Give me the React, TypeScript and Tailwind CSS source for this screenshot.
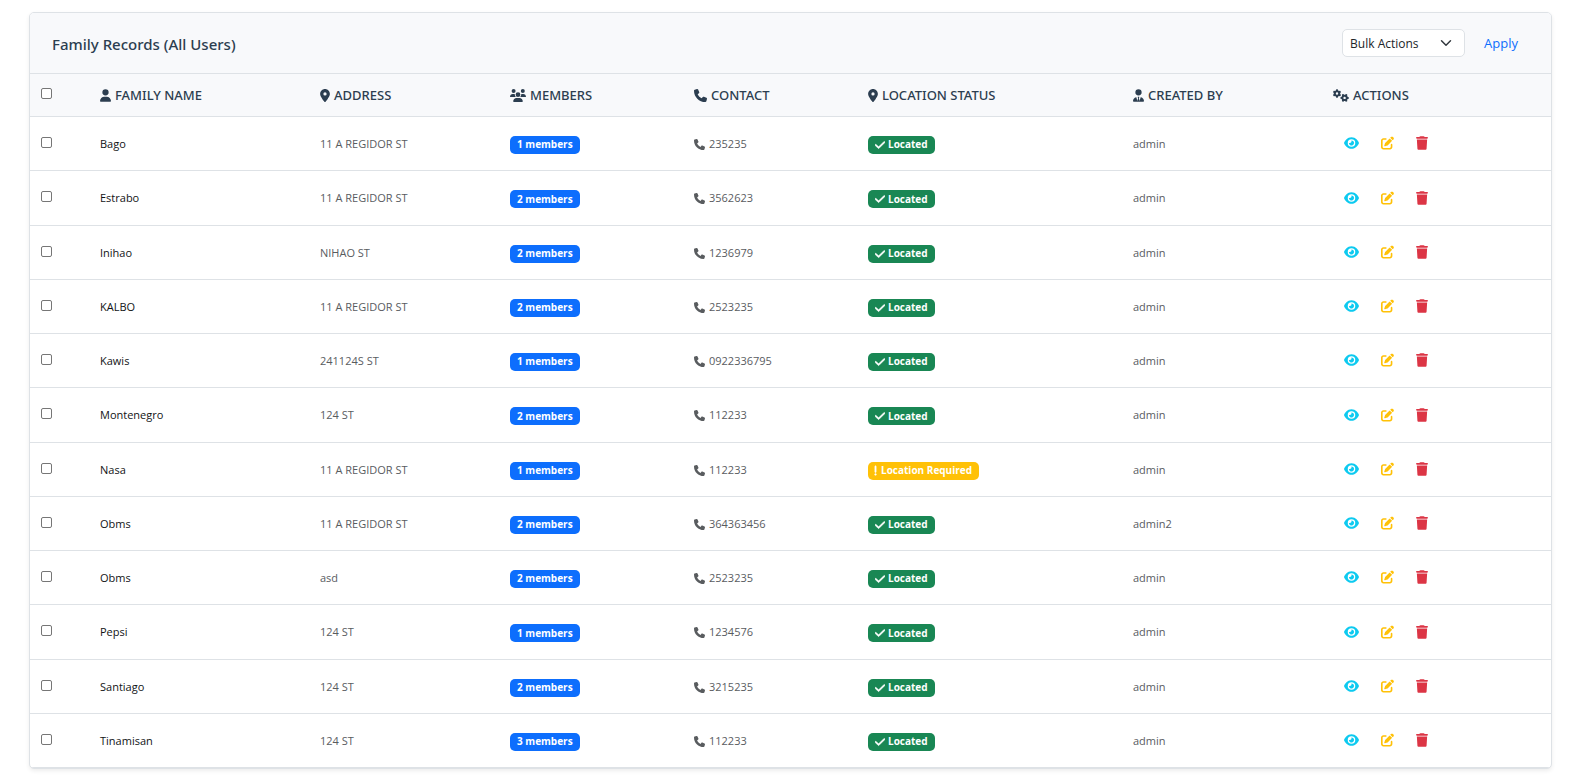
import type { ReactNode } from "react";
import {
  FaCheck,
  FaExclamation,
  FaEye,
  FaGears,
  FaLocationDot,
  FaPenToSquare,
  FaPhone,
  FaTrash,
  FaUser,
  FaUserTie,
  FaUsers,
} from "react-icons/fa6";

interface FamilyRecord {
  id: number;
  name: string;
  address: string;
  members: number;
  contact: string;
  located: boolean;
  createdBy: string;
}

const records: FamilyRecord[] = [
  { id: 1, name: "Bago", address: "11 A REGIDOR ST", members: 1, contact: "235235", located: true, createdBy: "admin" },
  { id: 2, name: "Estrabo", address: "11 A REGIDOR ST", members: 2, contact: "3562623", located: true, createdBy: "admin" },
  { id: 3, name: "Inihao", address: "NIHAO ST", members: 2, contact: "1236979", located: true, createdBy: "admin" },
  { id: 4, name: "KALBO", address: "11 A REGIDOR ST", members: 2, contact: "2523235", located: true, createdBy: "admin" },
  { id: 5, name: "Kawis", address: "241124S ST", members: 1, contact: "0922336795", located: true, createdBy: "admin" },
  { id: 6, name: "Montenegro", address: "124 ST", members: 2, contact: "112233", located: true, createdBy: "admin" },
  { id: 7, name: "Nasa", address: "11 A REGIDOR ST", members: 1, contact: "112233", located: false, createdBy: "admin" },
  { id: 8, name: "Obms", address: "11 A REGIDOR ST", members: 2, contact: "364363456", located: true, createdBy: "admin2" },
  { id: 9, name: "Obms", address: "asd", members: 2, contact: "2523235", located: true, createdBy: "admin" },
  { id: 10, name: "Pepsi", address: "124 ST", members: 1, contact: "1234576", located: true, createdBy: "admin" },
  { id: 11, name: "Santiago", address: "124 ST", members: 2, contact: "3215235", located: true, createdBy: "admin" },
  { id: 12, name: "Tinamisan", address: "124 ST", members: 3, contact: "112233", located: true, createdBy: "admin" },
];

function Checkbox({ label }: { label: string }) {
  return (
    <input
      type="checkbox"
      aria-label={label}
      className="mb-[2px] block size-[11px] appearance-none rounded-[2px] border border-[#767676] bg-white checked:bg-[#0d6efd]"
    />
  );
}

function HeadCell({ icon, width, children }: { icon: ReactNode; width: string; children: ReactNode }) {
  return (
    <th scope="col" className={`px-[11px] pt-[2px] text-left font-medium ${width}`}>
      <span className="flex items-center gap-1 whitespace-nowrap">
        {icon}
        {children}
      </span>
    </th>
  );
}

function Badge({ color, children }: { color: string; children: ReactNode }) {
  return (
    <span
      className={`mt-[3px] inline-flex h-[18px] items-center gap-[3px] rounded-[5px] px-[7px] align-middle font-['Open_Sans','Noto_Sans',sans-serif] text-[10px] font-bold whitespace-nowrap text-white ${color}`}
    >
      {children}
    </span>
  );
}

function RecordRow({ record }: { record: FamilyRecord }) {
  return (
    <tr className="h-[54px] border-b border-[#dee2e6] nth-[4n+2]:h-[55px]">
      <td className="px-[11px]">
        <Checkbox label={`Select ${record.name}`} />
      </td>
      <td className="px-[11px] pt-[2px] font-medium text-[#111315]">{record.name}</td>
      <td className="px-[11px] pt-[2px]">{record.address}</td>
      <td className="px-[11px]">
        <Badge color="bg-[#0d6efd]">{record.members} members</Badge>
      </td>
      <td className="px-[11px] pt-[2px]">
        <span className="flex items-center gap-1">
          <FaPhone className="size-[11px]" />
          {record.contact}
        </span>
      </td>
      <td className="px-[11px]">
        {record.located ? (
          <Badge color="bg-[#198754]">
            <FaCheck className="h-3 w-[10px] stroke-white stroke-[20]" />
            Located
          </Badge>
        ) : (
          <Badge color="bg-[#ffc107]">
            <FaExclamation className="-ml-[2px] h-[11px] w-[5px] stroke-white stroke-[20]" />
            Location Required
          </Badge>
        )}
      </td>
      <td className="px-[11px] pt-[2px]">{record.createdBy}</td>
      <td className="px-[11px]">
        <div className="flex items-center">
          <button type="button" aria-label={`View ${record.name}`} className="flex w-[37px] justify-center text-[#0dcaf0]">
            <FaEye className="h-[14px] w-[15px]" />
          </button>
          <button type="button" aria-label={`Edit ${record.name}`} className="flex w-[35px] justify-center text-[#ffc107]">
            <FaPenToSquare className="h-[14px] w-[13px]" />
          </button>
          <button type="button" aria-label={`Delete ${record.name}`} className="flex w-[34px] justify-center text-[#dc3545]">
            <FaTrash className="h-[14px] w-3" />
          </button>
        </div>
      </td>
    </tr>
  );
}

export default function App() {
  return (
    <main className="bg-white pt-3 pr-[18px] pb-4 pl-[29px] font-['Noto_Sans','Open_Sans',sans-serif]">
      <section className="overflow-hidden rounded-[5px] border border-[#dee2e6] bg-white shadow-[0_2px_4px_rgba(0,0,0,0.075)]">
        <header className="flex h-[61px] items-center justify-between border-b border-[#dee2e6] bg-[#f8f9fb] pr-[21px] pl-[22px]">
          <h5 className="mt-[2px] text-[15px] font-medium text-[#2c3e50]">Family Records (All Users)</h5>
          <div className="flex items-center gap-[7px] font-['Open_Sans','Noto_Sans',sans-serif] text-[13px]">
            <div className="relative">
              <select
                aria-label="Bulk actions"
                className="block h-7 w-[123px] appearance-none rounded-[5px] border border-[#dee2e6] bg-white pt-[2px] pr-7 pl-[7px] font-['Open_Sans','Noto_Sans',sans-serif] text-[12px] text-[#212529]"
              >
                <option>Bulk Actions</option>
              </select>
              <svg
                viewBox="0 0 16 16"
                className="pointer-events-none absolute top-2 right-[13px] size-3"
                fill="none"
                stroke="#343a40"
                strokeWidth="2"
                strokeLinecap="round"
                strokeLinejoin="round"
              >
                <path d="m2 5 6 6 6-6" />
              </svg>
            </div>
            <button type="button" className="px-3 pt-[2px] font-medium text-[#0d6efd]">
              Apply
            </button>
          </div>
        </header>
        <table className="w-full table-fixed border-collapse font-['Open_Sans','Noto_Sans',sans-serif] text-[11px] text-[#595c5f]">
          <thead className="bg-[#f8f9fb] font-['Noto_Sans','Open_Sans',sans-serif] text-[13px] text-[#2c3e50]">
            <tr className="h-[42px] border-b border-[#dee2e6]">
              <th scope="col" className="w-[59px] px-[11px]">
                <Checkbox label="Select all" />
              </th>
              <HeadCell icon={<FaUser className="h-[13px] w-[11px]" />} width="w-[220px]">
                FAMILY NAME
              </HeadCell>
              <HeadCell icon={<FaLocationDot className="h-[13px] w-[10px]" />} width="w-[190px]">
                ADDRESS
              </HeadCell>
              <HeadCell icon={<FaUsers className="h-[13px] w-4" />} width="w-[184px]">
                MEMBERS
              </HeadCell>
              <HeadCell icon={<FaPhone className="size-[13px]" />} width="w-[174px]">
                CONTACT
              </HeadCell>
              <HeadCell icon={<FaLocationDot className="h-[13px] w-[10px]" />} width="w-[265px]">
                LOCATION STATUS
              </HeadCell>
              <HeadCell icon={<FaUserTie className="h-[13px] w-[11px]" />} width="w-[200px]">
                CREATED BY
              </HeadCell>
              <HeadCell icon={<FaGears className="h-[13px] w-4" />} width="w-[229px]">
                ACTIONS
              </HeadCell>
            </tr>
          </thead>
          <tbody>
            {records.map((record) => (
              <RecordRow key={record.id} record={record} />
            ))}
          </tbody>
        </table>
      </section>
    </main>
  );
}
